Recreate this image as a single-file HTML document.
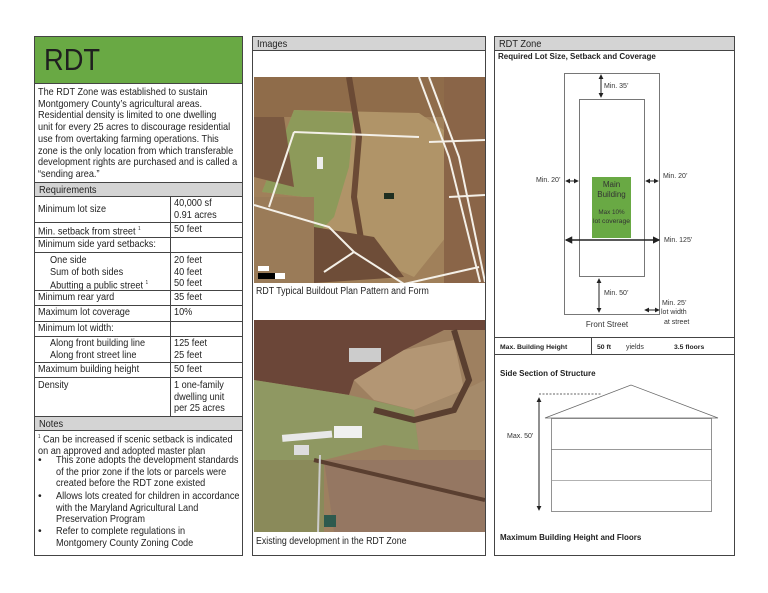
<!DOCTYPE html>
<html><head><meta charset="utf-8"><style>
*{margin:0;padding:0;box-sizing:border-box}
body{width:768px;height:593px;background:#fff;position:relative;overflow:hidden;font-family:"Liberation Sans",sans-serif;font-size:10.4px;color:#222;line-height:11.7px}
.a{position:absolute}
.n{transform:scaleX(.88);transform-origin:0 0;white-space:nowrap}
.box{position:absolute;border:1.3px solid #444}
.hd{position:absolute;background:#d4d4d4;border-bottom:1.3px solid #444;line-height:14px;font-size:10.5px}
.hd span{position:absolute;left:4px;top:0}
.row{position:absolute;left:34px;width:209px;border-top:1px solid #444}
.lb{position:absolute;left:4px}
.vl{position:absolute;left:140px}
.b{font-family:"Liberation Sans",sans-serif;font-weight:bold;font-size:8px}
sup{font-size:5px}
</style></head><body>

<!-- LEFT -->
<div class="box" style="left:34px;top:36px;width:209px;height:520px"></div>
<div class="a" style="left:35px;top:37px;width:207px;height:47px;background:#69a944;border-bottom:1px solid #444"></div>
<div class="a n" style="left:44px;top:42px;font-size:31px;line-height:36px;color:#1f1f1f;transform:scaleX(.88)">RDT</div>
<div class="a n" style="left:38px;top:87px">The RDT Zone was established to sustain<br>Montgomery County’s agricultural areas.<br>Residential density is limited to one dwelling<br>unit for every 25 acres to discourage residential<br>use from overtaking farming operations. This<br>zone is the only location from which transferable<br>development rights are purchased and is called a<br>“sending area.”</div>
<div class="hd" style="left:35px;top:182px;width:207px;height:15px;border-top:1px solid #444"><span class="n">Requirements</span></div>
<div class="a" style="left:170px;top:196px;width:1px;height:220px;background:#444"></div>
<div class="a" style="left:171px;top:237px;width:71px;height:15px;background:#fff"></div>
<div class="a" style="left:171px;top:321px;width:71px;height:15px;background:#fff"></div>
<div class="row" style="top:196px;height:26px"><span class="lb n" style="top:7px">Minimum lot size</span><span class="vl n" style="top:1px">40,000 sf<br>0.91 acres</span></div>
<div class="row" style="top:222px;height:15px"><span class="lb n" style="top:1px">Min. setback from street <sup>1</sup></span><span class="vl n" style="top:1px">50 feet</span></div>
<div class="row" style="top:237px;height:15px"><span class="lb n" style="top:1px">Minimum side yard setbacks:</span></div>
<div class="row" style="top:252px;height:38px"><span class="lb n" style="top:2px;left:16px">One side<br>Sum of both sides<br>Abutting a public street <sup>1</sup></span><span class="vl n" style="top:2px">20 feet<br>40 feet<br>50 feet</span></div>
<div class="row" style="top:290px;height:15px"><span class="lb n" style="top:1px">Minimum rear yard</span><span class="vl n" style="top:1px">35 feet</span></div>
<div class="row" style="top:305px;height:16px"><span class="lb n" style="top:1px">Maximum lot coverage</span><span class="vl n" style="top:1px">10%</span></div>
<div class="row" style="top:321px;height:15px"><span class="lb n" style="top:1px">Minimum lot width:</span></div>
<div class="row" style="top:336px;height:26px"><span class="lb n" style="top:1px;left:16px">Along front building line<br>Along front street line</span><span class="vl n" style="top:1px">125 feet<br>25 feet</span></div>
<div class="row" style="top:362px;height:15px"><span class="lb n" style="top:1px">Maximum building height</span><span class="vl n" style="top:1px">50 feet</span></div>
<div class="row" style="top:377px;height:39px"><span class="lb n" style="top:2px">Density</span><span class="vl n" style="top:2px">1 one-family<br>dwelling unit<br>per 25 acres</span></div>
<div class="hd" style="left:35px;top:416px;width:207px;height:15px;border-top:1px solid #444"><span class="n">Notes</span></div>
<div class="a n" style="left:38px;top:432px"><sup>1</sup> Can be increased if scenic setback is indicated<br>on an approved and adopted master plan</div>
<div class="a" style="left:38px;top:455px">•</div>
<div class="a n" style="left:56px;top:455px">This zone adopts the development standards<br>of the prior zone if the lots or parcels were<br>created before the RDT zone existed</div>
<div class="a" style="left:38px;top:491px">•</div>
<div class="a n" style="left:56px;top:491px">Allows lots created for children in accordance<br>with the Maryland Agricultural Land<br>Preservation Program</div>
<div class="a" style="left:38px;top:526px">•</div>
<div class="a n" style="left:56px;top:526px">Refer to complete regulations in<br>Montgomery County Zoning Code</div>

<!-- MIDDLE -->
<div class="box" style="left:252px;top:36px;width:234px;height:520px"></div>
<div class="hd" style="left:253px;top:37px;width:232px;height:14px"><span class="n">Images</span></div>
<svg class="a" style="left:254px;top:77px" width="231" height="206" viewBox="0 0 231 206">
<rect width="231" height="206" fill="#a0805a"/>
<rect x="0" y="0" width="231" height="40" fill="#8f6c4a"/>
<path d="M40 33 L165 36 L200 60 L216 130 L160 200 L70 160 L50 120 L8 115 Z" fill="#b09468"/>
<path d="M40 33 L100 36 L95 90 L80 140 L60 160 L50 120 L8 115 Z" fill="#8d9a5a"/>
<rect x="0" y="120" width="60" height="86" fill="#9a7b58"/>
<rect x="190" y="0" width="41" height="206" fill="#8a6548"/>
<path d="M0 40 L30 40 L40 110 L0 100 Z" fill="#7a5840"/>
<path d="M95 0 L105 60 L100 120 L110 180" stroke="#6b4a35" stroke-width="6" fill="none"/>
<path d="M60 150 L120 160 L150 200 L60 206 Z" fill="#6e4d38"/>
<path d="M40 55 L15 130 M40 55 L165 60 M0 128 L75 150 L100 175 L70 195 M100 175 L150 207 L225 190 M165 0 L195 80 L226 205 M175 0 L205 80 L231 205 M175 65 L231 63 M195 120 L231 118" stroke="#f4f0e8" stroke-width="2" fill="none"/>
<rect x="130" y="116" width="10" height="6" fill="#1e2e20"/>
<rect x="63" y="80" width="6" height="12" fill="#eee"/>
<rect x="4" y="189" width="11" height="5" fill="#fff"/><rect x="4" y="196" width="17" height="6" fill="#000"/><rect x="21" y="196" width="10" height="6" fill="#fff"/>
</svg>
<div class="a n" style="left:256px;top:286px;font-size:10px">RDT Typical Buildout Plan Pattern and Form</div>
<svg class="a" style="left:254px;top:320px" width="231" height="212" viewBox="0 0 231 212">
<rect width="231" height="212" fill="#9e8060"/>
<path d="M0 0 L231 0 L231 10 L190 10 L150 30 L100 60 L95 75 L0 60 Z" fill="#6b4638"/>
<path d="M100 60 L150 30 L200 20 L210 70 L160 90 L120 80 Z" fill="#b39674"/>
<path d="M0 60 L95 75 L160 90 L165 130 L130 125 L70 140 L0 140 Z" fill="#8f9862"/>
<path d="M160 90 L210 70 L231 60 L231 130 L165 130 Z" fill="#a58a6a"/>
<path d="M70 140 L231 140 L231 212 L80 212 Z" fill="#957762"/>
<path d="M0 140 L70 140 L70 212 L0 212 Z" fill="#8a8a5a"/>
<path d="M200 10 L215 60 L200 90 L160 100 L120 90" stroke="#5a3f30" stroke-width="6" fill="none"/>
<path d="M60 140 L231 180" stroke="#5a3f30" stroke-width="4" fill="none"/>
<rect x="95" y="28" width="32" height="14" fill="#ccc"/>
<rect x="28" y="113" width="50" height="7" fill="#e8e8e8" transform="rotate(-5 50 115)"/>
<rect x="80" y="106" width="28" height="12" fill="#f0f0f0"/>
<rect x="40" y="125" width="15" height="10" fill="#ddd"/>
<path d="M66 135 L64 212" stroke="#ccc" stroke-width="2"/>
<rect x="70" y="195" width="12" height="12" fill="#2e5a4e"/>
</svg>
<div class="a n" style="left:256px;top:536px;font-size:10px">Existing development in the RDT Zone</div>

<!-- RIGHT -->
<div class="box" style="left:494px;top:36px;width:241px;height:520px"></div>
<div class="hd" style="left:495px;top:37px;width:239px;height:14px"><span class="n">RDT Zone</span></div>
<div class="a b" style="left:498px;top:51px">Required Lot Size, Setback and Coverage</div>
<svg class="a" style="left:494px;top:36px" width="241" height="520" viewBox="494 36 241 520" font-family="Liberation Sans, sans-serif" font-size="7" fill="#333">
<defs><marker id="ah" viewBox="0 0 6 6" refX="5" refY="3" markerWidth="5" markerHeight="5" orient="auto-start-reverse"><path d="M0 0 L6 3 L0 6 Z" fill="#222"/></marker></defs>
<rect x="564.5" y="73.5" width="95" height="241" fill="none" stroke="#555" stroke-width="0.8"/>
<rect x="579.5" y="99.5" width="65" height="177" fill="none" stroke="#555" stroke-width="0.8"/>
<rect x="592" y="177" width="39" height="61" fill="#69a944"/>
<g stroke="#222" stroke-width="1" fill="none">
<line x1="601" y1="75" x2="601" y2="97" marker-start="url(#ah)" marker-end="url(#ah)"/>
<line x1="566" y1="181" x2="578" y2="181" marker-start="url(#ah)" marker-end="url(#ah)"/>
<line x1="646" y1="181" x2="658" y2="181" marker-start="url(#ah)" marker-end="url(#ah)"/>
<line x1="566" y1="240" x2="659" y2="240" stroke-width="1.5" marker-start="url(#ah)" marker-end="url(#ah)"/>
<line x1="599" y1="279" x2="599" y2="312" marker-start="url(#ah)" marker-end="url(#ah)"/>
<line x1="645" y1="310" x2="659" y2="310" marker-start="url(#ah)" marker-end="url(#ah)"/>
</g>
<text x="604" y="88">Min. 35’</text>
<text x="536" y="182">Min. 20’</text>
<text x="663" y="178">Min. 20’</text>
<text x="664" y="242">Min. 125’</text>
<text x="604" y="295">Min. 50’</text>
<text x="662" y="305">Min. 25’</text>
<text x="661" y="314">lot width</text>
<text x="664" y="324">at street</text>
<text x="611.5" y="187" text-anchor="middle" font-size="8">Main</text>
<text x="611.5" y="197" text-anchor="middle" font-size="8">Building</text>
<text x="611.5" y="214" text-anchor="middle" font-size="6.3">Max 10%</text>
<text x="611.5" y="223" text-anchor="middle" font-size="6" textLength="37" lengthAdjust="spacingAndGlyphs">lot coverage</text>
<text x="607" y="327" text-anchor="middle" font-size="8">Front Street</text>
<line x1="495" y1="337.5" x2="734" y2="337.5" stroke="#444"/>
<line x1="495" y1="354.5" x2="734" y2="354.5" stroke="#444"/>
<line x1="591.5" y1="337" x2="591.5" y2="355" stroke="#444"/>
<g font-family="Liberation Sans, sans-serif" font-weight="bold" font-size="6.8" fill="#222">
<text x="500" y="349">Max. Building Height</text>
<text x="597" y="349">50 ft</text>
<text x="674" y="349">3.5 floors</text>
<text x="500" y="376" font-size="8">Side Section of Structure</text>
<text x="500" y="540" font-size="8">Maximum Building Height and Floors</text>
</g>
<text x="626" y="349" font-size="7">yields</text>
<line x1="539" y1="394" x2="602" y2="394" stroke="#333" stroke-dasharray="2 1.5" stroke-width="0.8"/>
<line x1="539" y1="398" x2="539" y2="510" stroke="#222" stroke-width="1" marker-start="url(#ah)" marker-end="url(#ah)"/>
<path d="M545 418 L631 385 L718 418 Z" fill="none" stroke="#666" stroke-width="0.7"/>
<rect x="551.5" y="418.5" width="160" height="93" fill="none" stroke="#777" stroke-width="0.8"/>
<line x1="551" y1="449.5" x2="712" y2="449.5" stroke="#777" stroke-width="0.8"/>
<line x1="551" y1="480.5" x2="712" y2="480.5" stroke="#999" stroke-width="0.8"/>
<text x="507" y="438">Max. 50’</text>
</svg>
</body></html>
